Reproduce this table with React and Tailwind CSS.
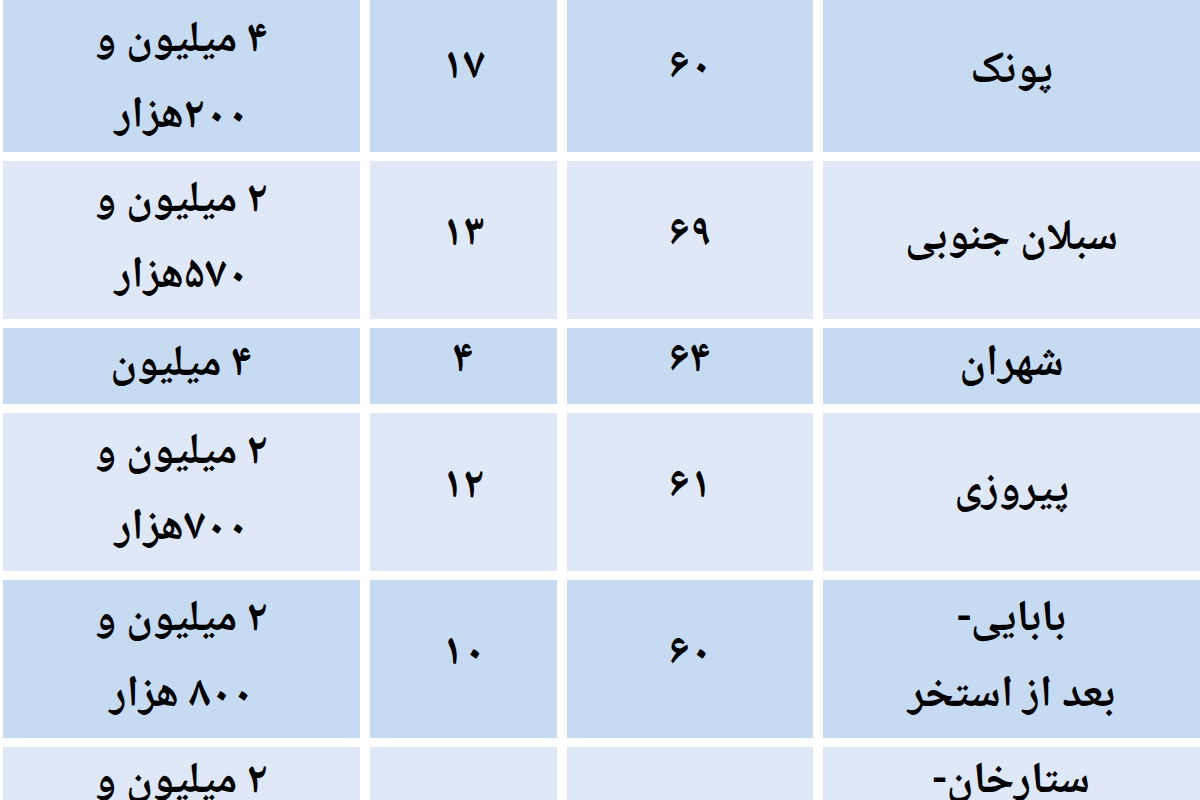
const rows = [
  { price: ['۴ میلیون و', '۲۰۰هزار'], age: '۱۷', area: '۶۰', name: ['پونک'], tall: true, dark: true, first: true },
  { price: ['۲ میلیون و', '۵۷۰هزار'], age: '۱۳', area: '۶۹', name: ['سبلان جنوبی'], tall: true, dark: false },
  { price: ['۴ میلیون'], age: '۴', area: '۶۴', name: ['شهران'], tall: false, dark: true },
  { price: ['۲ میلیون و', '۷۰۰هزار'], age: '۱۲', area: '۶۱', name: ['پیروزی'], tall: true, dark: false },
  { price: ['۲ میلیون و', '۸۰۰ هزار'], age: '۱۰', area: '۶۰', name: ['بابایی-', 'بعد از استخر'], tall: true, dark: true },
  { price: ['۲ میلیون و', '۵۰۰ هزار'], age: '', area: '', name: ['ستارخان-', 'بعد از برق'], tall: true, dark: false, last: true },
];

function Cell({ lines, dark, tall, extra = '' }) {
  return (
    <div
      dir="rtl"
      className={`flex flex-col items-center justify-center text-center ${tall ? 'h-[158px]' : 'h-[76px]'} ${dark ? 'bg-[#c6daf1]' : 'bg-[#dfe8f6]'} ${extra}`}
    >
      {lines.map((l, i) => (
        <div key={i} className="leading-[76px]">{l}</div>
      ))}
    </div>
  );
}

export default function App() {
  return (
    <div className="w-[1200px] h-[800px] overflow-hidden bg-white">
      <div
        className="-mt-[6px] pl-[3px] grid grid-cols-[357px_187px_246px_377px] gap-x-[10px] gap-y-[9px] text-[44px] font-bold text-black"
        style={{ fontFamily: '"Noto Naskh Arabic", "DejaVu Sans", sans-serif' }}
      >
        {rows.map((r, i) => (
          <div key={i} className="contents">
            <Cell lines={r.price} dark={r.dark} tall={r.tall} extra={r.first ? 'pt-[14px]' : r.last ? 'pb-[10px]' : ''} />
            <Cell lines={[r.age]} dark={r.dark} tall={r.tall} extra="pb-[8px]" />
            <Cell lines={[r.area]} dark={r.dark} tall={r.tall} extra="pb-[8px]" />
            <Cell lines={r.name} dark={r.dark} tall={r.tall} extra={r.last ? 'pb-[10px]' : ''} />
          </div>
        ))}
      </div>
    </div>
  );
}
